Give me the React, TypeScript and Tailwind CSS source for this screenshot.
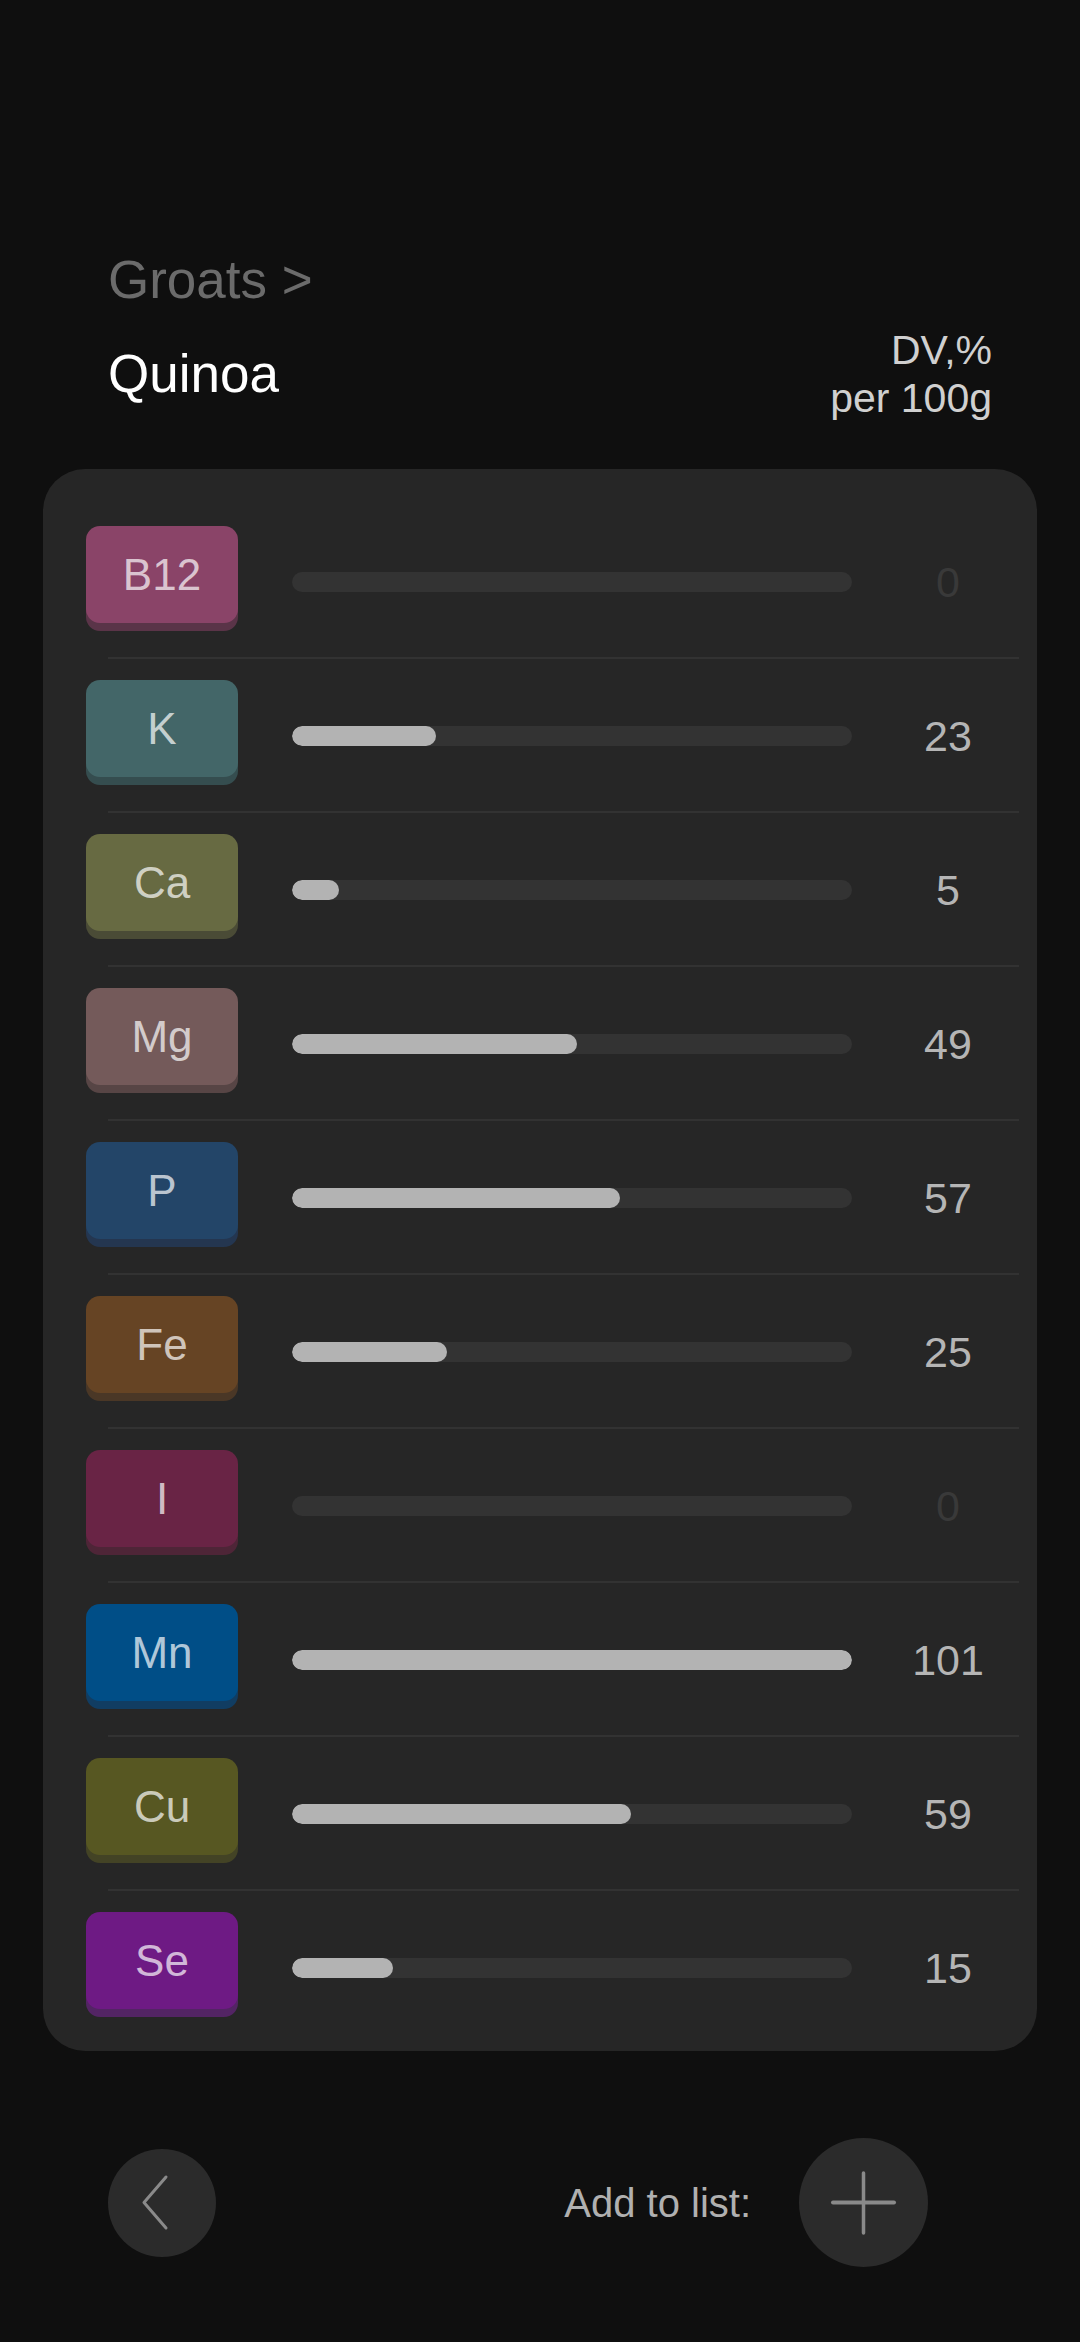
import React from "react";

type Item = { label: string; value: number; bg: string; shadow: string };

const items: Item[] = [
  { label: "B12", value: 0, bg: "bg-[#8a4468]", shadow: "shadow-[0_8px_0_#5a3448]" },
  { label: "K", value: 23, bg: "bg-[#436668]", shadow: "shadow-[0_8px_0_#354d4f]" },
  { label: "Ca", value: 5, bg: "bg-[#676a42]", shadow: "shadow-[0_8px_0_#4a4b36]" },
  { label: "Mg", value: 49, bg: "bg-[#745a5a]", shadow: "shadow-[0_8px_0_#574545]" },
  { label: "P", value: 57, bg: "bg-[#234568]", shadow: "shadow-[0_8px_0_#243650]" },
  { label: "Fe", value: 25, bg: "bg-[#664424]", shadow: "shadow-[0_8px_0_#4a3726]" },
  { label: "I", value: 0, bg: "bg-[#692445]", shadow: "shadow-[0_8px_0_#4e2537]" },
  { label: "Mn", value: 101, bg: "bg-[#004e87]", shadow: "shadow-[0_8px_0_#113d62]" },
  { label: "Cu", value: 59, bg: "bg-[#575722]", shadow: "shadow-[0_8px_0_#434325]" },
  { label: "Se", value: 15, bg: "bg-[#6e1a84]", shadow: "shadow-[0_8px_0_#532464]" },
];

function fillWidth(v: number): number {
  if (v <= 0) return 0;
  const c = Math.min(v, 100);
  return 20 + (c / 100) * 540;
}

function Row({ item, last }: { item: Item; last: boolean }) {
  const w = fillWidth(item.value);
  return (
    <div>
      <div className="flex items-start pl-[43px] pr-[13px] h-[112px]">
        <div
          className={`w-[152px] h-[97px] rounded-[14px] flex items-center justify-center text-[44px] leading-none text-white/70 ${item.bg} ${item.shadow}`}
        >
          {item.label}
        </div>
        <div className="h-[112px] flex items-center ml-[54px]">
          <div className="w-[560px] h-[20px] rounded-full bg-[#333333] overflow-hidden">
            {w > 0 && (
              <div className="h-full rounded-full bg-[#b3b3b3]" style={{ width: `${w}px` }} />
            )}
          </div>
        </div>
        <div
          className={`h-[112px] w-[152px] ml-[20px] flex items-center justify-center text-[43px] leading-none ${
            item.value === 0 ? "text-[#393939]" : "text-[#b5b5b5]"
          }`}
        >
          {item.value}
        </div>
      </div>
      {!last && (
        <div className="mt-[19px] mb-[21px] ml-[65px] mr-[18px] h-[2px] bg-[#323232]" />
      )}
    </div>
  );
}

export default function App() {
  return (
    <div
      className="w-[1080px] h-[2342px] bg-[#0f0f0f] overflow-hidden"
      style={{ fontFamily: '"Liberation Sans", Arial, sans-serif' }}
    >
      <div className="pt-[253px] pl-[108px] pr-[88px]">
        <div className="text-[53px] leading-[53px] text-[#6b6b6b]">Groats &gt;</div>
        <div className="flex justify-between items-start mt-[20px]">
          <div className="text-[53px] leading-[53px] text-white mt-[21px]">Quinoa</div>
          <div className="text-[41px] leading-[48px] text-[#d0d0d0] text-right">
            <div>DV,%</div>
            <div>per 100g</div>
          </div>
        </div>
      </div>

      <div className="mt-[47px] mx-[43px] rounded-[42px] bg-[#262626] pt-[57px] pb-[27px]">
        {items.map((it, i) => (
          <Row key={it.label} item={it} last={i === items.length - 1} />
        ))}
      </div>

      <div className="mt-[87px] pl-[108px] pr-[152px] h-[129px] flex items-center justify-between">
        <div className="w-[108px] h-[108px] rounded-full bg-[#2b2b2b]">
          <svg width="108" height="108" viewBox="0 0 108 108">
            <polyline
              points="58,28 36,53.5 58,79"
              fill="none"
              stroke="#8a8a8a"
              strokeWidth="3"
              strokeLinecap="round"
              strokeLinejoin="round"
            />
          </svg>
        </div>
        <div className="flex items-center">
          <span className="text-[40px] leading-none text-[#b0b0b0]">Add to list:</span>
          <div className="ml-[48px] w-[129px] h-[129px] rounded-full bg-[#2b2b2b]">
            <svg width="129" height="129" viewBox="0 0 129 129">
              <line x1="34" y1="64.5" x2="95" y2="64.5" stroke="#8a8a8a" strokeWidth="4" strokeLinecap="round" />
              <line x1="64.5" y1="35" x2="64.5" y2="95" stroke="#8a8a8a" strokeWidth="3.5" strokeLinecap="round" />
            </svg>
          </div>
        </div>
      </div>
    </div>
  );
}
